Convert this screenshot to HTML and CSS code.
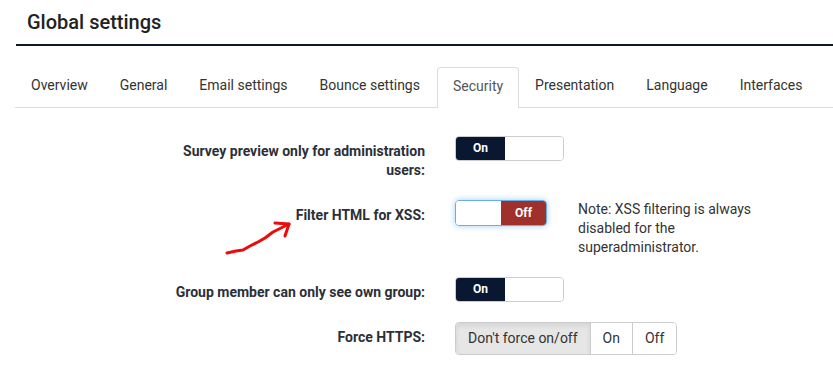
FILE: index.html
```html
<!DOCTYPE html>
<html lang="en">
<head>
    <meta charset="UTF-8">
    <title>Global settings</title>
    <link rel="stylesheet" href="styles.css">
</head>
<body>
    <header class="page-title">
        <h1>Global settings</h1>
    </header>

    <ul class="tabs">
        <li>Overview</li>
        <li>General</li>
        <li>Email settings</li>
        <li>Bounce settings</li>
        <li class="active">Security</li>
        <li>Presentation</li>
        <li>Language</li>
        <li>Interfaces</li>
    </ul>

    <form class="settings">
        <div class="row">
            <label class="label">Survey preview only for administration users:</label>
            <div class="controls">
                <div class="switch">
                    <span class="on">On</span>
                    <span class="blank blank-wide"></span>
                </div>
            </div>
        </div>

        <div class="row">
            <label class="label">Filter HTML for XSS:</label>
            <div class="controls">
                <div class="switch focused">
                    <span class="blank"></span>
                    <span class="off">Off</span>
                </div>
                <p class="note">Note: XSS filtering is always disabled for the superadministrator.</p>
            </div>
        </div>

        <div class="row">
            <label class="label">Group member can only see own group:</label>
            <div class="controls">
                <div class="switch">
                    <span class="on">On</span>
                    <span class="blank blank-wide"></span>
                </div>
            </div>
        </div>

        <div class="row">
            <label class="label">Force HTTPS:</label>
            <div class="controls">
                <div class="btn-group">
                    <span class="btn active">Don't force on/off</span>
                    <span class="btn">On</span>
                    <span class="btn">Off</span>
                </div>
            </div>
        </div>
    </form>

    <!-- hand drawn annotation -->
    <svg class="arrow" width="833" height="375" viewBox="0 0 833 375">
        <path d="M227 253 L236 251 L243 250 L250 246 L258 242 L265 238 L273 232 L281 228 L289 224" fill="none" stroke="#ec0a0a" stroke-width="3" stroke-linecap="round" stroke-linejoin="round"/>
        <path d="M275 223 L289 224 L285 236" fill="none" stroke="#ec0a0a" stroke-width="3" stroke-linecap="round" stroke-linejoin="round"/>
    </svg>
</body>
</html>
```

FILE: styles.css
```css
body {
    font-family: Roboto, "Liberation Sans", sans-serif;
    margin: 0;
    padding: 0;
    color: #333;
    background: #fff;
    position: relative;
    overflow: hidden;
}

.page-title {
    margin-left: 16px;
    padding: 10px 0 10px 11px;
    border-bottom: 2px solid #0c1a30;
}

.page-title h1 {
    margin: 0;
    font-size: 20px;
    font-weight: 500;
    line-height: 24px;
    color: #222;
}

.tabs {
    list-style: none;
    margin: 21px 0 0 15px;
    padding: 0;
    display: flex;
    border-bottom: 1px solid #ddd;
}

.tabs li {
    flex-shrink: 0;
    white-space: nowrap;
    height: 40px;
    line-height: 35px;
    padding: 0 15px;
    font-size: 14px;
    color: #333;
    border: 1px solid transparent;
    border-bottom: none;
    box-sizing: border-box;
    margin-bottom: -1px;
}

.tabs li:nth-child(5) {
    margin-left: 1px;
}

.tabs li.active {
    color: #555;
    background: #fff;
    border-color: #ddd;
    border-radius: 4px 4px 0 0;
    height: 41px;
    line-height: 37px;
}

.settings {
    margin: 28px 0 0 165px;
}

.row {
    display: grid;
    grid-template-columns: 260px auto;
    column-gap: 30px;
    margin-bottom: 20px;
}

.label {
    text-align: right;
    font-weight: 700;
    font-size: 14px;
    line-height: 19px;
    padding-top: 6px;
    color: #2b2f38;
}

.controls {
    display: flex;
    align-items: flex-start;
}

.switch {
    display: flex;
    height: 25px;
    border: 1px solid #ccc;
    border-radius: 4px;
    overflow: hidden;
    box-sizing: border-box;
}

.switch.focused {
    border-color: #66afe9;
    box-shadow: 0 0 6px rgba(102, 175, 233, 0.6);
    height: 26px;
}

.switch span {
    display: block;
    font-size: 12px;
    font-weight: 700;
    line-height: 23px;
    text-align: center;
    color: #fff;
}

.switch .on {
    width: 49px;
    background: #0a1730;
}

.switch .off {
    width: 45px;
    background: #a0302b;
    line-height: 24px;
}

.switch .blank {
    width: 45px;
    background: #fff;
}

.switch .blank-wide {
    width: 58px;
}

.note {
    margin: 0 0 0 31px;
    width: 190px;
    font-size: 14px;
    line-height: 19px;
    color: #333;
}

.btn-group {
    display: flex;
    border: 1px solid #ccc;
    border-radius: 4px;
    overflow: hidden;
    height: 33px;
    box-sizing: border-box;
}

.btn {
    font-size: 14px;
    line-height: 31px;
    padding: 0 12px;
    color: #333;
    background: #fff;
}

.btn + .btn {
    border-left: 1px solid #ccc;
}

.btn.active {
    background: #e6e6e6;
    box-shadow: inset 0 3px 5px rgba(0, 0, 0, 0.08);
}

.arrow {
    position: absolute;
    left: 0;
    top: 0;
    pointer-events: none;
}
```
